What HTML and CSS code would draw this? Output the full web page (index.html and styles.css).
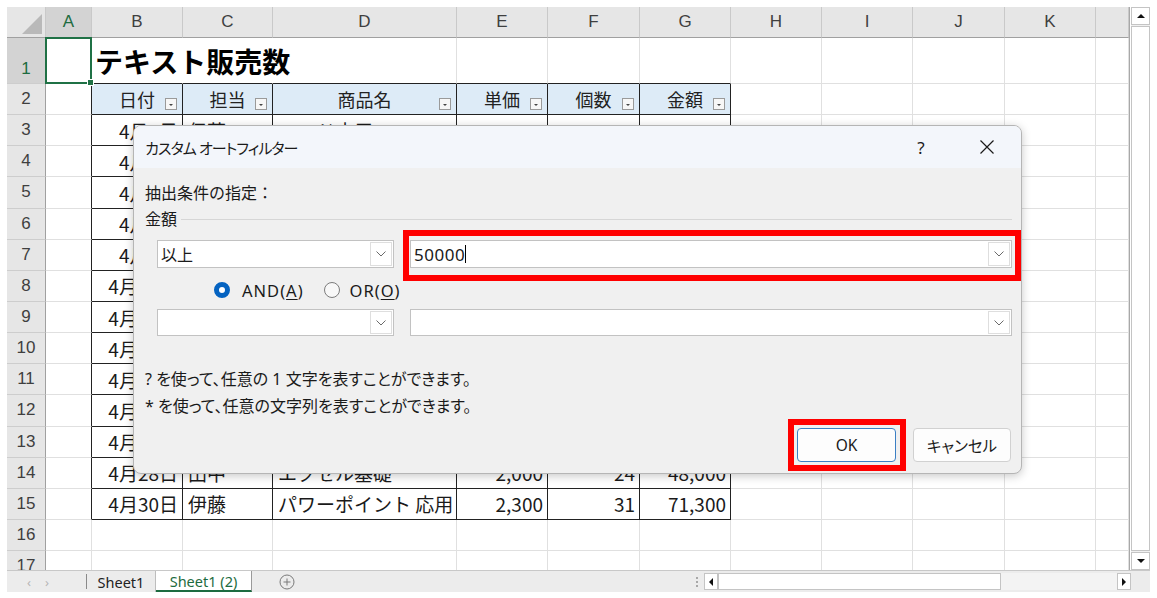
FILE: index.html
```html
<!DOCTYPE html>
<html lang="ja">
<head>
<meta charset="utf-8">
<title>カスタム オートフィルター</title>
<link rel="stylesheet" href="styles.css">
</head>
<body>
<div class="app">
  <div class="main">
    <div class="sheet">
      <div class="r hr">
        <div class="corner"><span class="tri"></span></div>
        <div class="selh">A</div><div>B</div><div>C</div><div>D</div><div>E</div><div>F</div><div>G</div><div>H</div><div>I</div><div>J</div><div>K</div><div></div>
      </div>
      <div class="r r1">
        <div class="rh selh">1</div>
        <div class="a1"><span class="selbox"><span class="handle"></span></span></div>
        <div class="tp nob"><span class="title">テキスト販売数</span></div>
        <div class="tp nob"></div>
        <div class="tp"></div><div class="tp"></div><div class="tp"></div><div class="tp"></div>
        <div></div><div></div><div></div><div></div><div></div>
      </div>
      <div class="r">
        <div class="rh">2</div><div class="lt"></div>
        <div class="t th">日付<span class="fb"></span></div>
        <div class="t th">担当<span class="fb"></span></div>
        <div class="t th">商品名<span class="fb"></span></div>
        <div class="t th">単価<span class="fb"></span></div>
        <div class="t th">個数<span class="fb"></span></div>
        <div class="t th">金額<span class="fb"></span></div>
        <div></div><div></div><div></div><div></div><div></div>
      </div>
      <div class="r"><div class="rh">3</div><div class="lt"></div><div class="t ra">4月2日</div><div class="t la">伊藤</div><div class="t la">ワード応用</div><div class="t ra">2,000</div><div class="t ra">20</div><div class="t ra">40,000</div><div></div><div></div><div></div><div></div><div></div></div>
      <div class="r"><div class="rh">4</div><div class="lt"></div><div class="t ra">4月5日</div><div class="t la">佐藤</div><div class="t la">エクセル基礎</div><div class="t ra">2,000</div><div class="t ra">18</div><div class="t ra">36,000</div><div></div><div></div><div></div><div></div><div></div></div>
      <div class="r"><div class="rh">5</div><div class="lt"></div><div class="t ra">4月8日</div><div class="t la">田中</div><div class="t la">パワーポイント基礎</div><div class="t ra">2,000</div><div class="t ra">15</div><div class="t ra">30,000</div><div></div><div></div><div></div><div></div><div></div></div>
      <div class="r"><div class="rh">6</div><div class="lt"></div><div class="t ra">4月9日</div><div class="t la">鈴木</div><div class="t la">ワード基礎</div><div class="t ra">1,800</div><div class="t ra">22</div><div class="t ra">39,600</div><div></div><div></div><div></div><div></div><div></div></div>
      <div class="r"><div class="rh">7</div><div class="lt"></div><div class="t ra">4月9日</div><div class="t la">伊藤</div><div class="t la">エクセル応用</div><div class="t ra">2,500</div><div class="t ra">26</div><div class="t ra">65,000</div><div></div><div></div><div></div><div></div><div></div></div>
      <div class="r"><div class="rh">8</div><div class="lt"></div><div class="t ra">4月12日</div><div class="t la">佐藤</div><div class="t la">ワード応用</div><div class="t ra">2,200</div><div class="t ra">19</div><div class="t ra">41,800</div><div></div><div></div><div></div><div></div><div></div></div>
      <div class="r"><div class="rh">9</div><div class="lt"></div><div class="t ra">4月15日</div><div class="t la">田中</div><div class="t la">エクセル基礎</div><div class="t ra">2,000</div><div class="t ra">30</div><div class="t ra">60,000</div><div></div><div></div><div></div><div></div><div></div></div>
      <div class="r"><div class="rh">10</div><div class="lt"></div><div class="t ra">4月18日</div><div class="t la">鈴木</div><div class="t la">パワーポイント応用</div><div class="t ra">2,300</div><div class="t ra">12</div><div class="t ra">27,600</div><div></div><div></div><div></div><div></div><div></div></div>
      <div class="r"><div class="rh">11</div><div class="lt"></div><div class="t ra">4月20日</div><div class="t la">伊藤</div><div class="t la">ワード基礎</div><div class="t ra">1,800</div><div class="t ra">25</div><div class="t ra">45,000</div><div></div><div></div><div></div><div></div><div></div></div>
      <div class="r"><div class="rh">12</div><div class="lt"></div><div class="t ra">4月22日</div><div class="t la">佐藤</div><div class="t la">エクセル応用</div><div class="t ra">2,500</div><div class="t ra">21</div><div class="t ra">52,500</div><div></div><div></div><div></div><div></div><div></div></div>
      <div class="r"><div class="rh">13</div><div class="lt"></div><div class="t ra">4月25日</div><div class="t la">田中</div><div class="t la">ワード応用</div><div class="t ra">2,200</div><div class="t ra">16</div><div class="t ra">35,200</div><div></div><div></div><div></div><div></div><div></div></div>
      <div class="r"><div class="rh">14</div><div class="lt"></div><div class="t ra">4月28日</div><div class="t la">田中</div><div class="t la">エクセル基礎</div><div class="t ra">2,000</div><div class="t ra">24</div><div class="t ra">48,000</div><div></div><div></div><div></div><div></div><div></div></div>
      <div class="r"><div class="rh">15</div><div class="lt"></div><div class="t ra">4月30日</div><div class="t la">伊藤</div><div class="t la">パワーポイント 応用</div><div class="t ra">2,300</div><div class="t ra">31</div><div class="t ra">71,300</div><div></div><div></div><div></div><div></div><div></div></div>
      <div class="r"><div class="rh">16</div><div></div><div></div><div></div><div></div><div></div><div></div><div></div><div></div><div></div><div></div><div></div><div></div></div>
      <div class="r"><div class="rh">17</div><div></div><div></div><div></div><div></div><div></div><div></div><div></div><div></div><div></div><div></div><div></div><div></div></div>
    </div>
    <div class="vs">
      <div class="vbtn"><span class="up"></span></div>
      <div class="vthumb"></div>
      <div class="vbtn"><span class="down"></span></div>
    </div>
  </div>

  <div class="tabbar">
    <div class="nav"><span>&#x2039;</span><span>&#x203A;</span></div>
    <div class="tab">Sheet1</div>
    <div class="tab active">Sheet1 (2)</div>
    <div class="add">
      <svg width="16" height="16" viewBox="0 0 16 16"><circle cx="8" cy="8" r="7" fill="none" stroke="#7a7a7a" stroke-width="1"/><path d="M8 4.5v7M4.5 8h7" stroke="#7a7a7a" stroke-width="1"/></svg>
    </div>
    <div class="grip"><i></i><i></i><i></i></div>
    <div class="hs">
      <div class="hbtn"><span class="left"></span></div>
      <div class="hthumb"></div>
      <div class="htrack"></div>
      <div class="hbtn"><span class="right"></span></div>
    </div>
  </div>

  <div class="dlg">
    <div class="dtitle">
      <span class="dtext">カスタム オートフィルター</span>
      <span class="help">?</span>
      <span class="close"><svg width="16" height="16" viewBox="0 0 16 16"><path d="M1.5 1.5l13 13M14.5 1.5l-13 13" stroke="#1a1a1a" stroke-width="1.2"/></svg></span>
    </div>
    <div class="dbody">
      <div class="lbl">抽出条件の指定：</div>
      <div class="grp"><span class="gname">金額</span><span class="gline"></span></div>
      <div class="crow">
        <div class="combo cl"><span class="val">以上</span><span class="dd"><svg width="10" height="6" viewBox="0 0 10 6"><path d="M0.5 0.5l4.5 4.5 4.5-4.5" fill="none" stroke="#6a6a6a" stroke-width="1"/></svg></span></div>
        <div class="combo cr"><span class="val num">50000<i class="caret"></i></span><span class="dd"><svg width="10" height="6" viewBox="0 0 10 6"><path d="M0.5 0.5l4.5 4.5 4.5-4.5" fill="none" stroke="#6a6a6a" stroke-width="1"/></svg></span></div>
      </div>
      <div class="rrow">
        <span class="radio on"></span><span class="rl and">AND(<u>A</u>)</span>
        <span class="radio off"></span><span class="rl">OR(<u>O</u>)</span>
      </div>
      <div class="crow c2">
        <div class="combo cl"><span class="val"></span><span class="dd"><svg width="10" height="6" viewBox="0 0 10 6"><path d="M0.5 0.5l4.5 4.5 4.5-4.5" fill="none" stroke="#6a6a6a" stroke-width="1"/></svg></span></div>
        <div class="combo cr"><span class="val"></span><span class="dd"><svg width="10" height="6" viewBox="0 0 10 6"><path d="M0.5 0.5l4.5 4.5 4.5-4.5" fill="none" stroke="#6a6a6a" stroke-width="1"/></svg></span></div>
      </div>
      <div class="hint h1">? を使って、任意の 1 文字を表すことができます。</div>
      <div class="hint h2">* を使って、任意の文字列を表すことができます。</div>
      <div class="btns">
        <button class="btn ok">OK</button>
        <button class="btn">キャンセル</button>
      </div>
    </div>
    <span class="mark mark1"></span>
    <span class="mark mark2"></span>
  </div>
</div>
</body>
</html>
```

FILE: styles.css
```css
body {
  margin: 0;
  background: #ffffff;
  font-family: "Noto Sans CJK JP", sans-serif;
  color: #111;
}

.app {
  position: relative;
  margin: 7px 0 0 7px;
  width: 1143px;
  height: 585px;
  display: flex;
  flex-direction: column;
}

.main {
  display: flex;
  height: 563px;
  gap: 1px;
}

.sheet {
  width: 1123px;
  height: 563px;
  overflow: hidden;
  border-right: 1px solid #a8a8a8;
  box-sizing: border-box;
}

.r {
  display: grid;
  grid-template-columns: 39px 46px 91px 90px 184px 91px 92px 91px 91px 91px 92px 91px 1fr;
  height: 31.15px;
}

.r > div {
  box-sizing: border-box;
  border-right: 1px solid #e0e0e0;
  border-bottom: 1px solid #e0e0e0;
  display: flex;
  align-items: center;
  min-width: 0;
  white-space: nowrap;
  font-size: 19px;
  color: #1a1a1a;
  position: relative;
}

.r.hr { height: 31px; }
.r.r1 { height: 46px; }

.hr > div {
  background: #e6e6e6;
  border-right: 1px solid #c9c9c9;
  border-bottom: 1px solid #a0a0a0;
  justify-content: center;
  font-family: "Liberation Sans", sans-serif;
  font-size: 17px;
  color: #3f3f3f;
}

.hr > .corner {
  background: #e6e6e6;
}
.tri {
  position: absolute;
  right: 3px;
  bottom: 3px;
  width: 0;
  height: 0;
  border-left: 20px solid transparent;
  border-bottom: 20px solid #b9b9b9;
}

.r > .rh {
  background: #e6e6e6;
  border-right: 1px solid #a0a0a0;
  border-bottom: 1px solid #cdcdcd;
  justify-content: center;
  font-family: "Liberation Sans", sans-serif;
  font-size: 17px;
  color: #3f3f3f;
}

.r > .selh {
  background: #d3d3d3;
  color: #1d6b40;
}
.r1 > .rh { align-items: flex-end; padding-bottom: 4px; }

.selbox {
  position: absolute;
  left: -1px;
  top: -1px;
  right: -1px;
  bottom: -1px;
  border: 2px solid #1f7145;
  z-index: 2;
}
.handle {
  position: absolute;
  right: -4px;
  bottom: -4px;
  width: 5px;
  height: 5px;
  background: #1f7145;
  border: 1px solid #fff;
}

.r > .nob { border-right-color: transparent; }
.r > .tp { border-bottom: 1px solid #222; }
.r > .lt { border-right: 1px solid #222; }
.r > .t {
  border-right: 1px solid #222;
  border-bottom: 1px solid #222;
}

.title {
  font-size: 28px;
  font-weight: 700;
  padding-left: 3px;
  color: #000;
  position: relative;
  z-index: 1;
}

.r > .th {
  background: #ddebf7;
  justify-content: center;
  font-size: 18px;
  color: #222;
}
.fb {
  position: absolute;
  right: 5px;
  bottom: 4px;
  width: 12px;
  height: 12px;
  box-sizing: border-box;
  background: #f7f7f7;
  border: 1px solid #9a9a9a;
}
.fb::after {
  content: "";
  position: absolute;
  left: 3px;
  top: 5px;
  border-left: 2px solid transparent;
  border-right: 2px solid transparent;
  border-top: 2px solid #444;
}

.r > .ra { justify-content: flex-end; padding-right: 4px; }
.r > .la { justify-content: flex-start; padding-left: 5px; }

/* vertical scrollbar */
.vs {
  width: 19px;
  height: 563px;
  display: flex;
  flex-direction: column;
  background: #f0f0f0;
  box-sizing: border-box;
}
.vbtn {
  height: 18px;
  box-sizing: border-box;
  border: 1px solid #c4c4c4;
  background: #fff;
  display: flex;
  align-items: center;
  justify-content: center;
}
.vthumb {
  flex: 1;
  margin: 1px 0;
  border: 1px solid #c4c4c4;
  background: #fff;
}
.up, .down, .left, .right { width: 0; height: 0; }
.up {
  border-left: 4px solid transparent;
  border-right: 4px solid transparent;
  border-bottom: 4px solid #111;
}
.down {
  border-left: 4px solid transparent;
  border-right: 4px solid transparent;
  border-top: 4px solid #111;
}
.left {
  border-top: 4px solid transparent;
  border-bottom: 4px solid transparent;
  border-right: 4px solid #111;
}
.right {
  border-top: 4px solid transparent;
  border-bottom: 4px solid transparent;
  border-left: 4px solid #111;
}

/* tab bar */
.tabbar {
  height: 22px;
  display: flex;
  align-items: stretch;
  background: #ececec;
  border-top: 1px solid #c8c8c8;
  box-sizing: border-box;
  width: 1143px;
  font-family: "Noto Sans", sans-serif;
  font-size: 14.5px;
}
.nav {
  width: 80px;
  display: flex;
  align-items: center;
  gap: 14px;
  padding-left: 20px;
  box-sizing: border-box;
  color: #b6b6b6;
  font-size: 13px;
  border-right: 1px solid #8a8a8a;
  margin: 3px 0;
}
.tab {
  display: flex;
  align-items: center;
  justify-content: center;
  width: 69px;
  color: #222;
  border-right: 1px solid #bdbdbd;
  box-sizing: border-box;
}
.tab.active {
  width: 96px;
  background: #fff;
  color: #1d6b40;
  border-bottom: 2px solid #1d6b40;
  border-right: 1px solid #9a9a9a;
}
.add {
  width: 70px;
  display: flex;
  align-items: center;
  justify-content: center;
}
.grip {
  margin-left: auto;
  width: 14px;
  display: flex;
  flex-direction: column;
  align-items: center;
  justify-content: center;
  gap: 2px;
}
.grip i {
  width: 2px;
  height: 2px;
  background: #a8a8a8;
}
.hs {
  display: flex;
  width: 427px;
  margin: 2px 19px 2px 0;
  box-sizing: border-box;
}
.hbtn {
  width: 14px;
  border: 1px solid #c4c4c4;
  background: #fff;
  display: flex;
  align-items: center;
  justify-content: center;
  box-sizing: border-box;
}
.hthumb {
  width: 283px;
  background: #fff;
  border: 1px solid #c4c4c4;
  box-sizing: border-box;
}
.htrack {
  flex: 1;
  background: #f3f3f3;
}

/* dialog */
.dlg {
  position: absolute;
  left: 126px;
  top: 118px;
  width: 889px;
  height: 349px;
  box-sizing: border-box;
  border: 1px solid #b5b5b5;
  border-radius: 8px;
  background: #f0f0f0;
  box-shadow: 0 2px 10px rgba(0, 0, 0, 0.22);
  overflow: hidden;
  font-family: "Noto Sans", "Noto Sans CJK JP", sans-serif;
  color: #1a1a1a;
  z-index: 5;
}
.dtitle {
  height: 42px;
  background: #f3f6fb;
  display: flex;
  align-items: center;
  padding-left: 11px;
  font-size: 15px;
}
.dtext {
  flex: 1;
  font-feature-settings: "palt";
  letter-spacing: -0.9px;
}
.help {
  width: 20px;
  text-align: center;
  font-size: 17px;
  margin-right: 46px;
}
.close {
  width: 20px;
  display: flex;
  justify-content: center;
  margin-right: 24px;
}
.dbody {
  padding: 0 9px 0 11px;
  font-size: 16px;
}
.lbl {
  margin-top: 12.5px;
  line-height: 23px;
  font-family: "Noto Sans CJK JP", sans-serif;
}
.grp {
  margin-top: 4px;
  line-height: 23px;
  display: flex;
  align-items: center;
  gap: 4px;
}
.gline {
  flex: 1;
  height: 0;
  border-top: 1px solid #d6d6d6;
  margin-top: 1px;
}
.crow {
  margin-top: 9.5px;
  padding-left: 12px;
  display: flex;
  gap: 16px;
  height: 28px;
}
.crow.c2 {
  margin-top: 9px;
  height: 27px;
}
.combo {
  box-sizing: border-box;
  height: 100%;
  background: #fff;
  border: 1px solid #c2c2c2;
  display: flex;
  align-items: center;
}
.cl { width: 237px; }
.cr { flex: 1; }
.val {
  flex: 1;
  padding-left: 3px;
  font-size: 16px;
  display: flex;
  align-items: center;
}
.val.num {
  font-size: 17px;
  letter-spacing: 0.5px;
}
.caret {
  display: inline-block;
  width: 1px;
  height: 18px;
  background: #000;
}
.dd {
  width: 22px;
  height: calc(100% - 2px);
  margin-right: 1px;
  box-sizing: border-box;
  border: 1px solid #dedede;
  display: flex;
  align-items: center;
  justify-content: center;
}
.rrow {
  margin-top: 12px;
  height: 20px;
  display: flex;
  align-items: center;
  padding-left: 69px;
  font-size: 16.5px;
}
.radio {
  width: 16px;
  height: 16px;
  box-sizing: border-box;
  border-radius: 50%;
}
.radio.on {
  border: 5px solid #0563c1;
  background: #fff;
  margin-right: 12px;
}
.radio.off {
  border: 1px solid #7c7c7c;
  background: #f8f8f8;
  margin-right: 10px;
}
.rl { letter-spacing: 1px; }
.rl.and { margin-right: 20px; }
.rl u { text-underline-offset: 2px; }
.hint {
  line-height: 20px;
  font-size: 16px;
  font-feature-settings: "palt";
}
.h1 { margin-top: 33px; }
.h2 { margin-top: 7px; }
.btns {
  margin-top: 12px;
  display: flex;
  justify-content: flex-end;
  gap: 17px;
  padding-right: 1px;
}
.btn {
  width: 98px;
  height: 34px;
  border: 1px solid #d1d1d1;
  border-radius: 4px;
  background: #fdfdfd;
  font-family: "Noto Sans", "Noto Sans CJK JP", sans-serif;
  font-feature-settings: "palt";
  font-size: 15.5px;
  color: #1a1a1a;
  padding: 0;
}
.btn.ok {
  width: 99px;
  border-color: #3b7fc4;
}

/* red annotation boxes */
.mark {
  position: absolute;
  border: 6px solid #ff0000;
  box-sizing: border-box;
}
.mark1 {
  left: 269px;
  top: 104px;
  width: 618px;
  height: 51px;
}
.mark2 {
  left: 654px;
  top: 293px;
  width: 118px;
  height: 52px;
}
```
